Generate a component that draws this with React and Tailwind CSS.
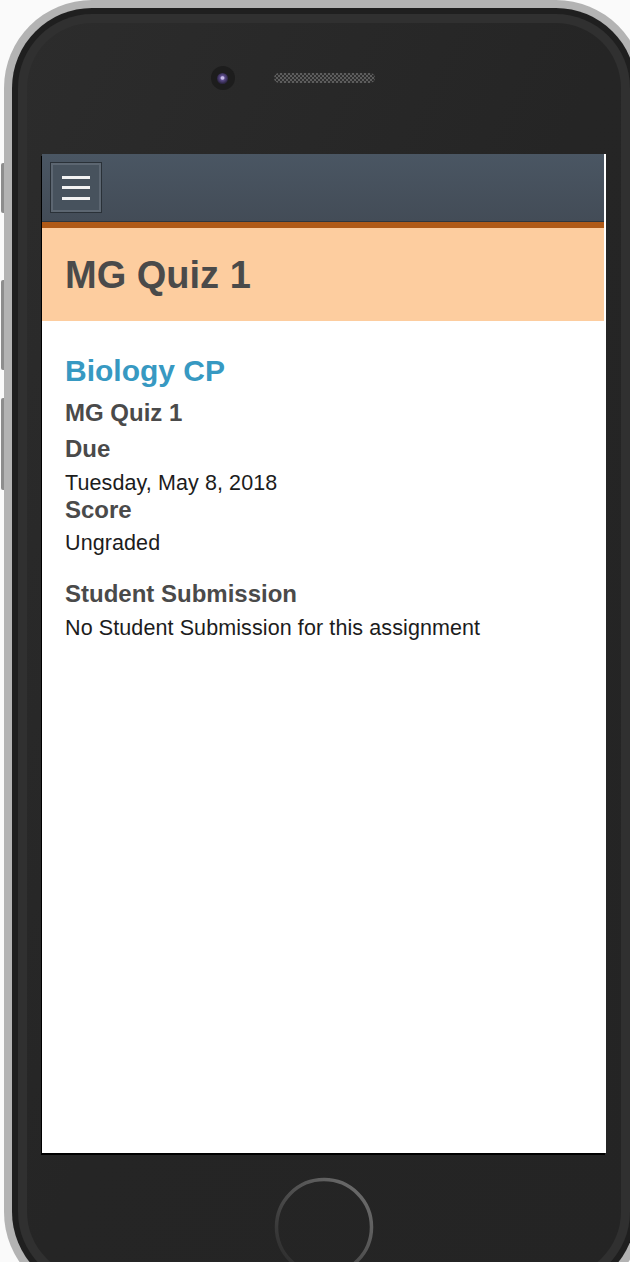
import React from "react";

const sideButtons = [
  { mt: "mt-[163px]", h: "h-[50px]" },
  { mt: "mt-[67px]", h: "h-[90px]" },
  { mt: "mt-[28px]", h: "h-[92px]" },
];

function HomeButton() {
  return (
    <svg width="100" height="100" viewBox="0 0 100 100" className="block">
      <defs>
        <linearGradient id="homeRing" x1="0" y1="1" x2="1" y2="0">
          <stop offset="0" stopColor="#262626" />
          <stop offset="0.45" stopColor="#4a4a4a" />
          <stop offset="1" stopColor="#727272" />
        </linearGradient>
      </defs>
      <circle cx="50" cy="50" r="47.5" fill="none" stroke="url(#homeRing)" strokeWidth="3.5" />
    </svg>
  );
}

function DetailHeading({ children, className = "" }) {
  return (
    <h3 className={`text-[24px] leading-[28px] font-bold text-[#4a4a4a] ${className}`}>
      {children}
    </h3>
  );
}

function DetailText({ children, className = "" }) {
  return (
    <p className={`text-[21.5px] leading-[24px] tracking-[0.1px] text-[#1c1c1c] ${className}`}>
      {children}
    </p>
  );
}

export default function App() {
  return (
    <div className="w-[630px] h-[1262px] overflow-hidden bg-[#fafafa] flex font-['Liberation_Sans',Arial,sans-serif]">
      {/* side buttons */}
      <div className="w-[4px] shrink-0 flex flex-col">
        {sideButtons.map((b, i) => (
          <div key={i} className={`${b.mt} ${b.h} ml-[1px] w-[3px] rounded-l-[2px] bg-[#8d8d8d]`} />
        ))}
      </div>

      {/* phone body */}
      <div className="shrink-0 w-[640px] h-[1300px] rounded-[88px] bg-[#b3b3b3] p-[8px]">
        <div className="h-full rounded-[80px] bg-[#1f1f1f] p-[6px]">
          <div className="h-full rounded-[74px] bg-[#303030] p-[9px]">
            <div className="h-full rounded-[65px] bg-linear-to-br from-[#2c2c2c] via-[#252525] to-[#242424] px-[15px] pt-[43px]">
              {/* camera + speaker */}
              <div className="flex items-center justify-center h-[24px]">
                <div className="w-[24px] h-[24px] rounded-full bg-[#1d1d1d] flex items-center justify-center">
                  <div className="w-[11px] h-[11px] rounded-full bg-[radial-gradient(circle_at_50%_45%,#c8bbe8_0px,#c8bbe8_1.2px,#5a4b88_2.5px,#2e2646_5.5px)]" />
                </div>
                <div className="w-[39px]" />
                <div className="w-[101px] h-[10px] rounded-full bg-[repeating-conic-gradient(#5d5d5d_0%_25%,#2f2f2f_0%_50%)] bg-[length:4px_4px]" />
                <div className="w-[63px]" />
              </div>

              {/* screen */}
              <div className="mt-[64px] w-[564px] h-[999px] bg-white shadow-[-1px_2px_0_0_#000]">
                <div className="w-[562px]">
                  <div className="h-[68px] bg-linear-to-b from-[#4a5663] to-[#434c57] border-b border-[#2e363e] p-[9px]">
                    <button className="w-[50px] h-[49px] bg-[#47525d] border-2 border-[#5c6671] shadow-[0_0_0_1px_#2a3138] flex flex-col items-center justify-center gap-[7.5px]">
                      <span className="block w-[28px] h-[3px] bg-[#f2f2f2]" />
                      <span className="block w-[28px] h-[3px] bg-[#f2f2f2]" />
                      <span className="block w-[28px] h-[3px] bg-[#f2f2f2]" />
                    </button>
                  </div>
                  <div className="h-[6px] bg-[#b05a17]" />
                  <div className="h-[93px] bg-[#fdcd9f] pl-[23px] pt-[25px]">
                    <h1 className="text-[38px] leading-[44px] font-bold text-[#4a4a4a]">MG Quiz 1</h1>
                  </div>

                  <div className="px-[23px] pt-[32px]">
                    <h2 className="text-[30px] leading-[36px] font-bold text-[#3799c2]">Biology CP</h2>
                    <DetailHeading className="mt-[10px]">MG Quiz 1</DetailHeading>
                    <DetailHeading className="mt-[8px]">Due</DetailHeading>
                    <DetailText className="mt-[8px]">Tuesday, May 8, 2018</DetailText>
                    <DetailHeading className="mt-[1px]">Score</DetailHeading>
                    <DetailText className="mt-[7px]">Ungraded</DetailText>
                    <DetailHeading className="mt-[25px]">Student Submission</DetailHeading>
                    <DetailText className="mt-[8px]">No Student Submission for this assignment</DetailText>
                  </div>
                </div>
              </div>

              {/* home button */}
              <div className="mt-[24px] flex justify-center">
                <HomeButton />
              </div>
            </div>
          </div>
        </div>
      </div>
    </div>
  );
}
